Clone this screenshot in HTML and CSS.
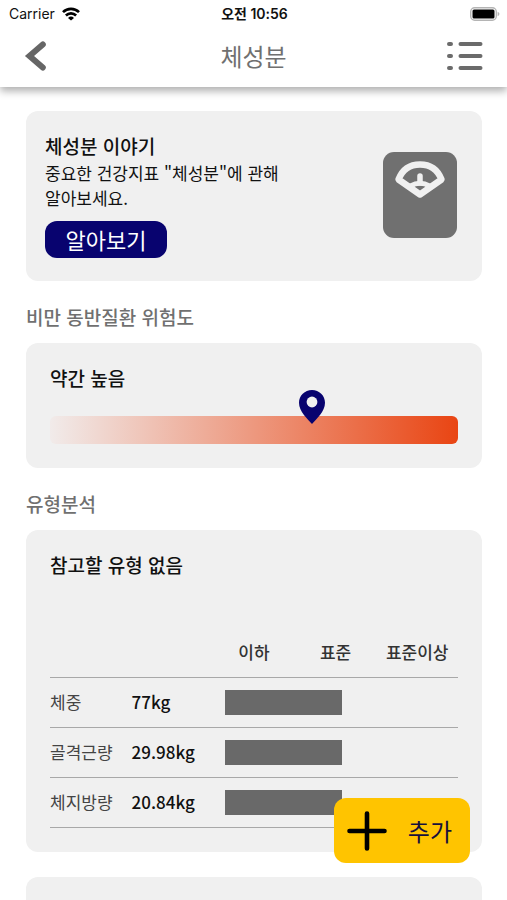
FILE: index.html
```html
<!DOCTYPE html>
<html lang="ko">
<head>
<meta charset="utf-8">
<meta name="viewport" content="width=device-width, initial-scale=1">
<title>체성분</title>
<link rel="stylesheet" href="styles.css">
</head>
<body>
<div class="app">
  <header class="top">
    <div class="status">
      <div class="carrier">
        <span>Carrier</span>
        <svg class="wifi" viewBox="0 0 18 14" aria-hidden="true">
          <path d="M1 5.200a11.200 11.200 0 0 1 16 0M3.900 8.500a7.200 7.200 0 0 1 10.200 0" fill="none" stroke="#000" stroke-width="2.600"/>
          <path d="M9 13.600 6 10.900a4.300 4.300 0 0 1 6 0z"/>
        </svg>
      </div>
      <span class="clock">오전 10:56</span>
      <svg class="battery" viewBox="0 0 30 14" aria-hidden="true">
        <rect x=".7" y=".7" width="25.6" height="12.6" rx="4" fill="#fff" stroke="#b4b4b4" stroke-width="1.4"/>
        <rect x="2.500" y="2.500" width="22" height="9" rx="1.500"/>
        <path d="M27.600 4.800c2.400.8 2.400 3.600 0 4.400z" fill="#b4b4b4"/>
      </svg>
    </div>
    <nav class="bar">
      <button class="icon-button" type="button" aria-label="뒤로">
        <svg class="back" viewBox="0 0 24 32" aria-hidden="true">
          <path d="M18.800 4.500 5.500 16l13.300 11.500" fill="none" stroke="#666" stroke-width="6" stroke-linecap="round"/>
        </svg>
      </button>
      <h1 class="title">체성분</h1>
      <button class="icon-button" type="button" aria-label="목록">
        <svg class="list" viewBox="0 0 36 30" aria-hidden="true">
          <path d="M2 3h2M2 15h2M2 27h2M13.500 3h20M13.500 15h20M13.500 27h20" stroke="#6b6b6b" stroke-width="4" stroke-linecap="round"/>
        </svg>
      </button>
    </nav>
  </header>

  <main class="content">
    <section class="card story">
      <div class="story-text">
        <h2 class="card-title">체성분 이야기</h2>
        <p class="story-body">중요한 건강지표 "체성분"에 관해<br>알아보세요.</p>
        <button class="learn" type="button">알아보기</button>
      </div>
      <svg class="scale" viewBox="0 0 74 86" aria-hidden="true">
        <rect width="74" height="86" rx="11" fill="#707070"/>
        <g fill="none" stroke="#f0f0f0" stroke-linecap="round" stroke-linejoin="round">
          <path d="M15.500 27.500C20 16 29 12.500 37 12.500s17 3.500 21.500 15L37 42.500z" stroke-width="6.500"/>
          <path d="M37 24v7" stroke-width="5.500"/>
          <path d="M27.500 34Q37 28.500 46.500 34" stroke-width="5"/>
        </g>
      </svg>
    </section>

    <h2 class="section-title">비만 동반질환 위험도</h2>
    <section class="card risk">
      <h3 class="card-title">약간 높음</h3>
      <div class="gauge">
        <svg class="pin" viewBox="0 0 26 34" aria-hidden="true">
          <path fill="#08036f" d="M13 0C5.800 0 0 5.600 0 12.800 0 21.500 8.500 29 13 34c4.500-5 13-12.500 13-21.200C26 5.600 20.200 0 13 0z"/>
          <circle cx="13" cy="12" r="5.400" fill="#f0f0f0"/>
        </svg>
      </div>
    </section>

    <h2 class="section-title">유형분석</h2>
    <section class="card analysis">
      <h3 class="card-title">참고할 유형 없음</h3>
      <table class="measures">
        <thead>
          <tr><td></td><td></td><th scope="col">이하</th><th scope="col">표준</th><th scope="col">표준이상</th></tr>
        </thead>
        <tbody>
          <tr><th scope="row">체중</th><td class="value">77kg</td><td class="level" colspan="3"><div class="level-bar"></div></td></tr>
          <tr><th scope="row">골격근량</th><td class="value">29.98kg</td><td class="level" colspan="3"><div class="level-bar"></div></td></tr>
          <tr><th scope="row">체지방량</th><td class="value">20.84kg</td><td class="level" colspan="3"><div class="level-bar"></div></td></tr>
        </tbody>
      </table>
    </section>

    <section class="card next"></section>
  </main>

  <button class="add" type="button">
    <svg class="plus" viewBox="0 0 40 40" aria-hidden="true">
      <path d="M20 2.500v35M2.500 20h35" stroke="#000" stroke-width="4.600" stroke-linecap="round"/>
    </svg>
    <span>추가</span>
  </button>
</div>
</body>
</html>
```

FILE: styles.css
```css
* {
  box-sizing: border-box;
}

body {
  margin: 0;
  background: #fff;
  color: #111;
  font-family: "Noto Sans CJK KR", sans-serif;
}

h1, h2, h3, p {
  margin: 0;
}

button {
  border: 0;
  padding: 0;
  background: none;
  color: inherit;
  font: inherit;
  cursor: pointer;
}

svg {
  display: block;
  flex: none;
}

.app {
  display: flex;
  flex-direction: column;
  height: 100vh;
}

.top {
  position: relative;
  z-index: 1;
  padding-bottom: 3px;
  background: #fff;
  box-shadow: 0 4px 8px rgba(0, 0, 0, 0.32);
}

.status {
  display: grid;
  grid-template-columns: 1fr auto 1fr;
  align-items: center;
  height: 28px;
  padding: 0 7px 0 9px;
  font-family: Inter, "Noto Sans CJK KR", sans-serif;
  font-size: 14px;
  line-height: 20px;
}

.carrier {
  display: flex;
  align-items: center;
  gap: 7px;
}

.wifi {
  width: 18px;
  height: 14px;
}

.clock {
  font-weight: 600;
}

.battery {
  justify-self: end;
  width: 30px;
  height: 14px;
}

.bar {
  display: flex;
  align-items: center;
  justify-content: space-between;
  height: 56px;
  padding: 0 24px;
}

.icon-button {
  display: flex;
  width: 36px;
}

.back {
  width: 24px;
  height: 32px;
}

.list {
  width: 36px;
  height: 30px;
}

.title {
  color: #707070;
  font-size: 24px;
  font-weight: 400;
  line-height: 36px;
}

.content {
  flex: 1;
  min-height: 0;
  overflow-y: auto;
  scrollbar-width: none;
  padding: 24px 25px 24px 26px;
}

.card {
  border-radius: 12px;
  background: #f0f0f0;
}

.card-title {
  font-size: 19px;
  font-weight: 500;
  line-height: 28px;
}

.section-title {
  padding: 22px 0 12px;
  color: #707070;
  font-size: 19px;
  font-weight: 500;
  line-height: 28px;
}

.story {
  display: flex;
  align-items: center;
  justify-content: space-between;
  padding: 21px 25px 23px 19px;
}

.story-body {
  font-size: 17px;
  line-height: 25px;
}

.learn {
  margin-top: 11px;
  width: 122px;
  border-radius: 12px;
  background: #08036f;
  color: #fff;
  font-size: 22px;
  line-height: 37px;
}

.scale {
  width: 74px;
  height: 86px;
}

.risk {
  padding: 21px 24px 24px;
}

.gauge {
  position: relative;
  height: 28px;
  margin-top: 24px;
  border-radius: 6px;
  background: linear-gradient(to right, #f1ebea, #e94513);
}

.pin {
  position: absolute;
  bottom: 20px;
  left: 61%;
  width: 26px;
  height: 34px;
}

.analysis {
  padding: 21px 24px 24px;
}

.measures {
  width: 100%;
  margin-top: 48px;
  border-collapse: collapse;
  table-layout: fixed;
  font-size: 17px;
  line-height: 24px;
}

.measures th,
.measures td {
  height: 50px;
  padding: 0;
  border-bottom: 1px solid #a8a8a8;
}

.measures thead th {
  color: #333;
  font-weight: 500;
}

.measures tbody th {
  color: #444;
  font-weight: 400;
  text-align: left;
}

.measures .value {
  font-weight: 500;
}

.measures .level {
  padding-left: 12px;
}

.level-bar {
  width: 50%;
  min-width: 116px;
  height: 25px;
  background: #696969;
}

.next {
  height: 170px;
  margin-top: 25px;
}

.add {
  position: fixed;
  right: 37px;
  bottom: 37px;
  z-index: 2;
  display: flex;
  align-items: center;
  justify-content: space-between;
  width: 136px;
  height: 65px;
  padding: 0 18px 0 13px;
  border-radius: 12px;
  background: #ffc400;
  color: #17103c;
  font-size: 24px;
  line-height: 36px;
}

.plus {
  width: 40px;
  height: 40px;
}
```
